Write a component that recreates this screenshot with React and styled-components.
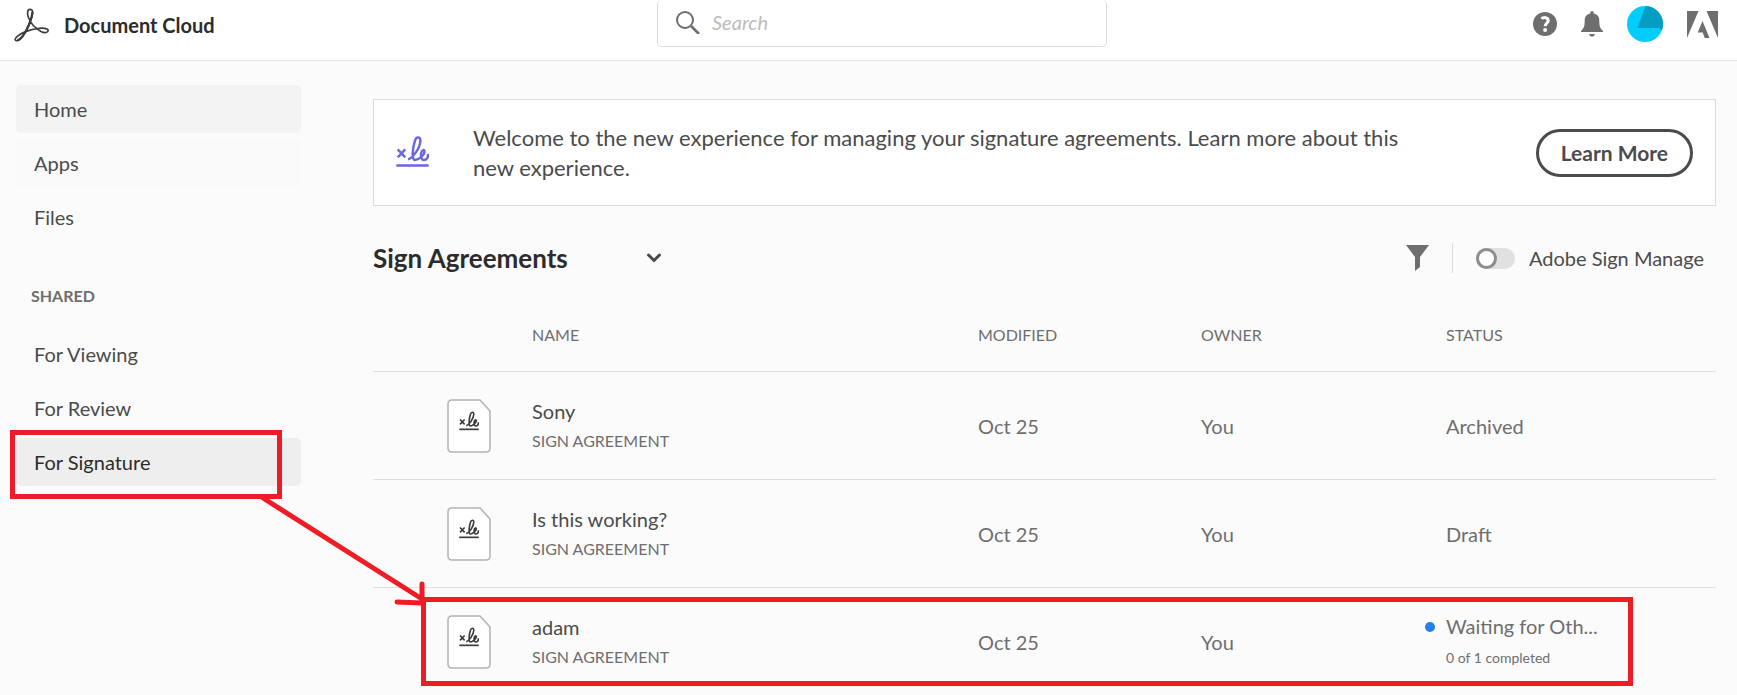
import React, { useState } from 'react';
import styled, { createGlobalStyle } from 'styled-components';

const GlobalStyle = createGlobalStyle`
  *, *::before {
    box-sizing: border-box;
  }

  body {
    margin: 0;
    background: #fbfbfb;
    color: #4b4b4b;
    font-family: Lato, "Open Sans", sans-serif;
    font-size: 20px;
    line-height: 24px;
  }

  button, input {
    font: inherit;
    color: inherit;
  }

  h1, h2, p, ul {
    margin: 0;
    padding: 0;
  }

  svg {
    flex-shrink: 0;
  }
`

const Page = styled.div`
  position: relative;
`

const Header = styled.header`
  display: grid;
  grid-template-columns: 657fr 450fr 630fr;
  height: 61px;
  background: white;
  border-bottom: 1px solid #e4e4e4;
`

const Brand = styled.a`
  display: flex;
  align-items: center;
  gap: 15px;
  padding: 0 0 10px 14px;
  color: #2c2c2c;
  font-weight: bold;
  text-decoration: none;
`

const SearchBox = styled.label`
  display: flex;
  align-items: center;
  gap: 12px;
  height: 47px;
  padding: 0 18px 2px 18px;
  border: 1px solid #dcdcdc;
  border-top: none;
  border-radius: 5px;
`

const SearchInput = styled.input`
  flex: 1;
  min-width: 0;
  border: none;
  outline: none;
  padding: 0;
  background: transparent;

  &::placeholder {
    color: #bcbcbc;
    font-style: italic;
    opacity: 1;
  }
`

const Actions = styled.div`
  display: flex;
  align-items: center;
  justify-content: flex-end;
  gap: 24px;
  padding: 0 19px 12px 0;
`

const IconButton = styled.button`
  display: flex;
  padding: 0;
  border: none;
  background: none;
  color: #6e6e6e;
  cursor: pointer;
`

const Body = styled.div`
  display: flex;
`

const Sidebar = styled.nav`
  flex: 0 0 301px;
  padding: 24px 0 0 16px;
`

const NavList = styled.ul`
  display: flex;
  flex-direction: column;
  gap: 6px;
  list-style: none;
`

const navColors = {
  active: '#eeeeee',
  hover: '#f3f3f3',
  faint: '#f9f9f9',
}

const NavLink = styled.a`
  display: block;
  padding: 12px 18px;
  border-radius: 5px;
  background: ${props => navColors[props.$tone] || 'transparent'};
  color: ${props => props.$tone === 'active' ? '#2c2c2c' : '#4b4b4b'};
  text-decoration: none;
`

const NavHeading = styled.h2`
  padding: 43px 0 22px 15px;
  color: #6e6e6e;
  font-size: 16px;
  font-weight: bold;
`

const Main = styled.main`
  flex: 1;
  min-width: 0;
  padding: 38px 21px 0 72px;
`

const Banner = styled.section`
  display: flex;
  align-items: center;
  height: 107px;
  padding: 0 22px;
  background: white;
  border: 1px solid #dcdcdc;
`

const BannerText = styled.p`
  flex: 1;
  padding: 0 110px 0 44px;
  font-size: 22px;
  line-height: 30px;
`

const PillButton = styled.button`
  height: 48px;
  padding: 0 22px;
  border: 3px solid #4b4b4b;
  border-radius: 24px;
  background: white;
  font-size: 21px;
  font-weight: bold;
  white-space: nowrap;
  cursor: pointer;
`

const Toolbar = styled.div`
  display: flex;
  align-items: center;
  justify-content: space-between;
  height: 94px;
  margin-top: 5px;
  padding-right: 12px;
`

const Title = styled.h1`
  font-size: 26px;
  line-height: 30px;
`

const TitleButton = styled.button`
  display: flex;
  align-items: center;
  gap: 78px;
  padding: 0;
  border: none;
  background: none;
  color: #2c2c2c;
  font-weight: bold;
  cursor: pointer;
`

const Tools = styled.div`
  display: flex;
  align-items: center;
`

const Divider = styled.span`
  width: 1px;
  height: 30px;
  margin: 0 23px;
  background: #dcdcdc;
`

const SwitchLabel = styled.label`
  display: flex;
  align-items: center;
  gap: 14px;
  cursor: pointer;
`

const Switch = styled.input`
  appearance: none;
  display: flex;
  justify-content: ${props => props.checked ? 'flex-end' : 'flex-start'};
  width: 39px;
  height: 21px;
  margin: 0;
  border-radius: 11px;
  background: #e1e1e1;
  cursor: pointer;

  &::before {
    content: '';
    width: 21px;
    height: 21px;
    border: 3px solid #8e8e8e;
    border-radius: 50%;
    background: white;
  }
`

const Table = styled.table`
  width: 100%;
  table-layout: fixed;
  border-collapse: collapse;
  color: #6e6e6e;
`

const HeadCell = styled.th`
  width: ${props => props.$width || 'auto'};
  height: 66px;
  padding: 0 0 6px;
  border-bottom: 1px solid #dfdfdf;
  font-size: 16px;
  font-weight: normal;
  text-align: left;
`

const Row = styled.tr`
  height: 108px;
  border-bottom: 1px solid #dfdfdf;

  &:last-child {
    border-bottom: none;
  }
`

const Cell = styled.td`
  padding: 2px 0 0;
`

const IconCell = styled(Cell)`
  padding-left: 74px;
`

const Name = styled.div`
  color: #4b4b4b;
`

const Kind = styled.div`
  margin-top: 6px;
  font-size: 16px;
`

const Status = styled.div`
  position: relative;
`

const StatusDot = styled.span`
  position: absolute;
  top: 8px;
  left: -21px;
  width: 10px;
  height: 10px;
  border-radius: 50%;
  background: #2680eb;
`

const Progress = styled.div`
  margin-top: 8px;
  font-size: 14px;
`

const Frame = styled.div`
  position: absolute;
  border: 5px solid #ee1c24;
  pointer-events: none;
`

const NavFrame = styled(Frame)`
  top: 430px;
  left: 10px;
  width: 272px;
  height: 69px;
`

const RowFrame = styled(Frame)`
  top: 597px;
  left: 421px;
  right: 104px;
  height: 89px;
`

const Arrow = styled.svg`
  position: absolute;
  top: 490px;
  left: 255px;
  pointer-events: none;
`

const files = [
  { name: 'Sony', modified: 'Oct 25', owner: 'You', status: 'Archived' },
  { name: 'Is this working?', modified: 'Oct 25', owner: 'You', status: 'Draft' },
  { name: 'adam', modified: 'Oct 25', owner: 'You', status: 'Waiting for Oth...', progress: '0 of 1 completed' },
]

function AcrobatLogo() {
  return (
    <svg width="35" height="34" viewBox="40 22 106 104" fill="none" stroke="#3c3c3c" strokeWidth="5">
      <path d="M88 26C80 26 79 40 84 52C90 68 104 84 122 94C134 100 144 97 144 91C144 84 128 82 110 85C90 88 66 96 52 107C42 114 40 122 48 122C58 122 72 102 84 76C92 58 98 40 96 31C95 27 92 26 88 26Z"/>
      <path d="M50 121C60 118 74 98 84 76C90 62 95 48 96 34" strokeWidth="7"/>
    </svg>
  )
}

function SignGlyph() {
  return (
    <>
      <path d="M108 175L130 198M130 175L108 198"/>
      <path d="M138 204C152 200 173 172 174 150C174 137 162 136 158 150C151 172 148 205 158 206C168 206 186 191 186 181C186 174 178 176 176 186C174 198 178 206 184 206C192 206 197 199 196 188"/>
      <path d="M104 222H198"/>
    </>
  )
}

function SignIcon() {
  return (
    <svg width="33" height="33" viewBox="103 136 96 96" fill="none" stroke="#6b66dd" strokeWidth="7">
      <SignGlyph/>
    </svg>
  )
}

function FileIcon() {
  return (
    <svg width="44" height="54" viewBox="0 0 44 54" display="block">
      <path d="M5 1H33L43 12V49Q43 53 39 53H5Q1 53 1 49V5Q1 1 5 1Z" fill="white" stroke="#b3b3b3" strokeWidth="1.5"/>
      <svg x="12" y="12" width="20" height="20" viewBox="103 134 96 96" fill="none" stroke="#3c3c3c" strokeWidth="8">
        <SignGlyph/>
      </svg>
    </svg>
  )
}

function SearchIcon() {
  return (
    <svg width="24" height="24" viewBox="0 0 24 24" fill="none" stroke="#6e6e6e" strokeWidth="2">
      <circle cx="9" cy="10" r="8"/>
      <path d="M15 16L23 24" strokeWidth="2.6"/>
    </svg>
  )
}

function HelpIcon() {
  return (
    <svg width="24" height="24" viewBox="0 0 24 24">
      <circle cx="12" cy="12" r="12" fill="#6e6e6e"/>
      <path d="M8.5 6.8C10 5.2 15.2 4.8 15.2 8.6C15.2 11.2 12.2 11.4 12.2 14.2" fill="none" stroke="white" strokeWidth="3"/>
      <circle cx="12.1" cy="18" r="2" fill="white"/>
    </svg>
  )
}

function BellIcon() {
  return (
    <svg width="22" height="26" viewBox="0 0 22 26" fill="#6e6e6e">
      <path d="M9.3 1.5Q9.3 0 11 0Q12.7 0 12.7 1.5V2.6C17 3.3 18.3 6.5 18.3 10C18.3 15 19 17.5 22 20V21H0V20C3 17.5 3.7 15 3.7 10C3.7 6.5 5 3.3 9.3 2.6Z"/>
      <path d="M8 23H14Q13.3 25.7 11 25.7Q8.7 25.7 8 23Z"/>
    </svg>
  )
}

function Avatar() {
  return (
    <svg width="36" height="36" viewBox="0 0 36 36">
      <circle cx="18" cy="18" r="18" fill="#00cdfb"/>
      <path d="M18.5 0A18 18 0 0 1 34.8 24.5L32 22H10.5Z" fill="#069dc4"/>
    </svg>
  )
}

function AdobeLogo() {
  return (
    <svg width="31" height="27" viewBox="0 0 31 27" fill="#6e6e6e">
      <path d="M0 0H11.5L0 27ZM19.5 0H31V27ZM15.5 10L22.5 27H17.8L15.7 21.500H10.700Z"/>
    </svg>
  )
}

function FilterIcon() {
  return (
    <svg width="23" height="26" viewBox="0 0 23 26" fill="#6e6e6e">
      <path d="M0 0H23L14 12V22L9 26V12Z"/>
    </svg>
  )
}

function ChevronIcon() {
  return (
    <svg width="16" height="10" viewBox="0 0 16 10" fill="none" stroke="#4b4b4b" strokeWidth="3" strokeLinecap="round">
      <path d="M2.5 2L8 7.5L13.5 2"/>
    </svg>
  )
}

function App() {
  const [manage, setManage] = useState(false)

  return (
    <Page>
      <GlobalStyle/>
      <Header>
        <Brand href="#"><AcrobatLogo/>Document Cloud</Brand>
        <SearchBox>
          <SearchIcon/>
          <SearchInput type="text" placeholder="Search" aria-label="Search"/>
        </SearchBox>
        <Actions>
          <IconButton aria-label="Help"><HelpIcon/></IconButton>
          <IconButton aria-label="Notifications"><BellIcon/></IconButton>
          <IconButton aria-label="Account"><Avatar/></IconButton>
          <IconButton aria-label="Adobe"><AdobeLogo/></IconButton>
        </Actions>
      </Header>
      <Body>
        <Sidebar>
          <NavList>
            <li><NavLink href="#" $tone="hover">Home</NavLink></li>
            <li><NavLink href="#" $tone="faint">Apps</NavLink></li>
            <li><NavLink href="#">Files</NavLink></li>
          </NavList>
          <NavHeading>SHARED</NavHeading>
          <NavList>
            <li><NavLink href="#">For Viewing</NavLink></li>
            <li><NavLink href="#">For Review</NavLink></li>
            <li><NavLink href="#" $tone="active">For Signature</NavLink></li>
          </NavList>
        </Sidebar>
        <Main>
          <Banner>
            <SignIcon/>
            <BannerText>
              Welcome to the new experience for managing your signature agreements. Learn more about this new experience.
            </BannerText>
            <PillButton>Learn More</PillButton>
          </Banner>
          <Toolbar>
            <Title>
              <TitleButton>Sign Agreements<ChevronIcon/></TitleButton>
            </Title>
            <Tools>
              <IconButton aria-label="Filter"><FilterIcon/></IconButton>
              <Divider/>
              <SwitchLabel>
                <Switch type="checkbox" checked={manage} onChange={e => setManage(e.target.checked)}/>
                Adobe Sign Manage
              </SwitchLabel>
            </Tools>
          </Toolbar>
          <Table>
            <thead>
              <tr>
                <HeadCell $width="159px"/>
                <HeadCell>NAME</HeadCell>
                <HeadCell $width="223px">MODIFIED</HeadCell>
                <HeadCell $width="245px">OWNER</HeadCell>
                <HeadCell $width="270px">STATUS</HeadCell>
              </tr>
            </thead>
            <tbody>
              {files.map(file =>
                <Row key={file.name}>
                  <IconCell><FileIcon/></IconCell>
                  <Cell>
                    <Name>{file.name}</Name>
                    <Kind>SIGN AGREEMENT</Kind>
                  </Cell>
                  <Cell>{file.modified}</Cell>
                  <Cell>{file.owner}</Cell>
                  <Cell>
                    <Status>
                      {file.progress ? <StatusDot/> : null}
                      {file.status}
                      {file.progress ? <Progress>{file.progress}</Progress> : null}
                    </Status>
                  </Cell>
                </Row>
              )}
            </tbody>
          </Table>
        </Main>
      </Body>
      <NavFrame/>
      <RowFrame/>
      <Arrow width="175" height="120" viewBox="0 0 175 120" fill="none" stroke="#ee1c24" strokeWidth="5" strokeLinecap="round">
        <path d="M8 8L167 109M167 94V113M142 112L167 113"/>
      </Arrow>
    </Page>
  )
}

export default App;
